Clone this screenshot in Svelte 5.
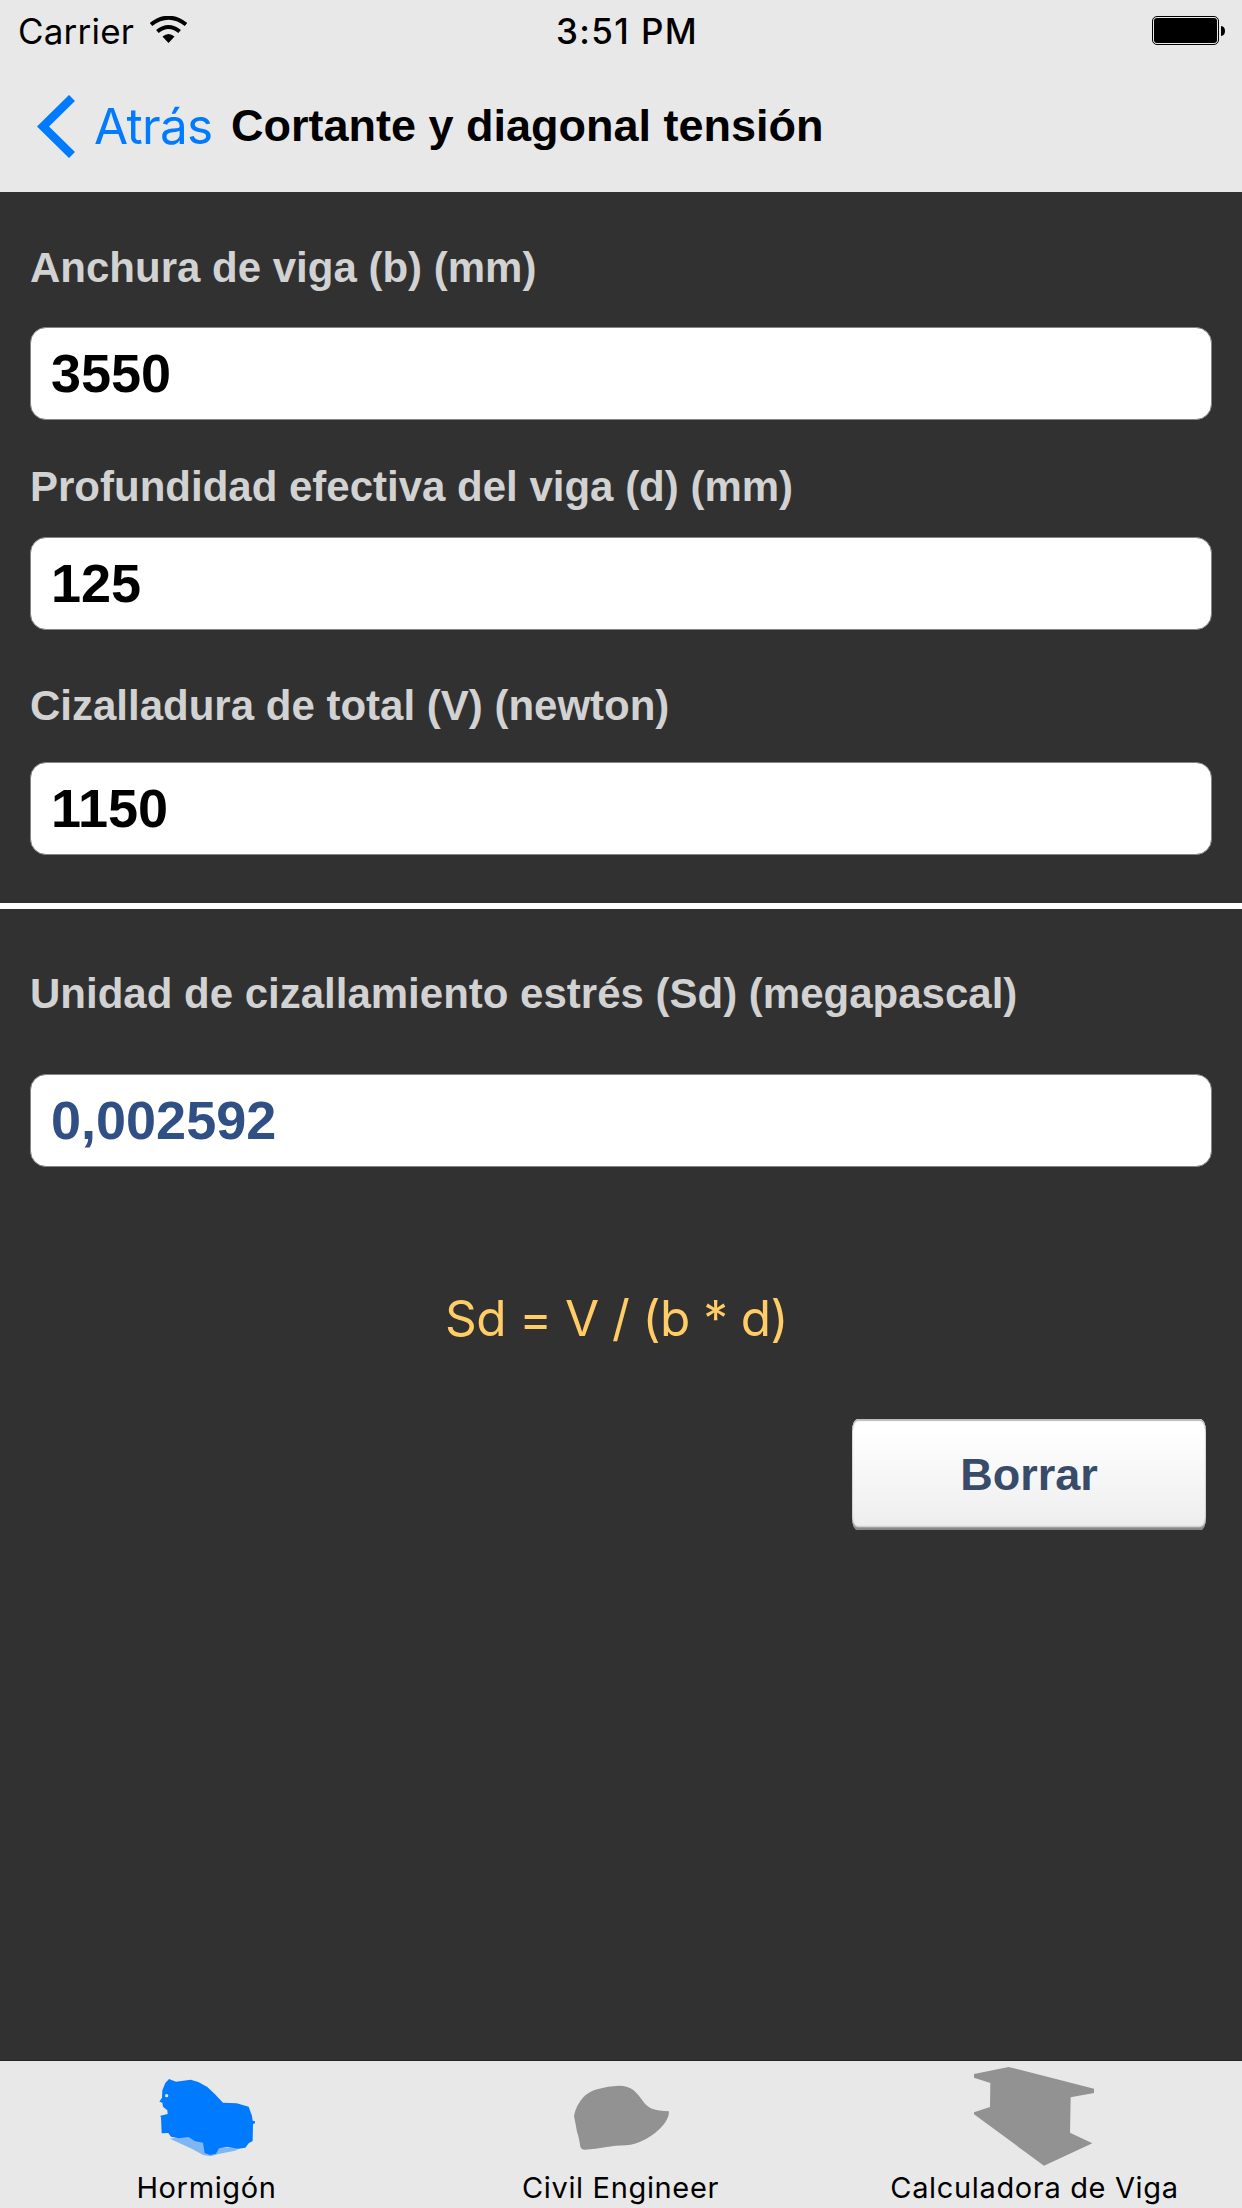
<script>
	let fields = $state([
		{ id: 'b', label: 'Anchura de viga (b) (mm)', value: '3550' },
		{ id: 'd', label: 'Profundidad efectiva del viga (d) (mm)', value: '125' },
		{ id: 'v', label: 'Cizalladura de total (V) (newton)', value: '1150' }
	]);

	// Sd = V / (b * d), shown with a decimal comma
	let stress = $derived.by(() => {
		const [b, d, v] = fields.map((f) => parseFloat(f.value.replace(',', '.')));
		const sd = v / (b * d);
		return Number.isFinite(sd) ? sd.toFixed(6).replace('.', ',') : '';
	});

	let active = $state('hormigon');

	const tabs = [
		{ id: 'hormigon', name: 'Hormigón' },
		{ id: 'civil', name: 'Civil Engineer' },
		{ id: 'viga', name: 'Calculadora de Viga' }
	];

	function clear() {
		for (const field of fields) field.value = '';
	}
</script>

<svelte:head>
	<title>Cortante y diagonal tensión</title>
</svelte:head>

<div class="screen">
	<header>
		<div class="status-bar">
			<div class="carrier">
				<span>Carrier</span>
				<svg class="wifi" viewBox="0 0 110 80" aria-hidden="true">
					<path d="M3 25 Q55 -15 107 25" fill="none" stroke="#000" stroke-width="12" />
					<path d="M22 46 Q55 19 88 46" fill="none" stroke="#000" stroke-width="12" />
					<path d="M37 61 Q55 46 73 61 L55 80 Z" />
				</svg>
			</div>
			<span class="time">3:51 PM</span>
			<div class="battery">
				<svg viewBox="0 0 73 29" aria-hidden="true">
					<rect x="0.5" y="0.5" width="66" height="28" rx="4.5" fill="#e8e8e8" stroke="#000" />
					<rect x="2" y="2" width="63" height="25" rx="3" />
					<path d="M69 10 Q73 10.5 73 15 Q73 19.5 69 20 Z" />
				</svg>
			</div>
		</div>
		<nav>
			<button class="back">
				<svg viewBox="0 0 39 63" aria-hidden="true">
					<path d="M35 3 L6 31.5 L35 60" fill="none" stroke="#007aff" stroke-width="8.5" />
				</svg>
				<span>Atrás</span>
			</button>
			<h1>Cortante y diagonal tensión</h1>
		</nav>
	</header>

	<main>
		<section class="inputs">
			{#each fields as field (field.id)}
				<div class="field {field.id}">
					<label for={field.id}>{field.label}</label>
					<input id={field.id} type="text" bind:value={field.value} />
				</div>
			{/each}
		</section>

		<section class="result">
			<div class="field sd">
				<label for="sd">Unidad de cizallamiento estrés (Sd) (megapascal)</label>
				<input id="sd" type="text" value={stress} readonly />
			</div>
			<p class="formula">Sd = V / (b * d)</p>
			<button class="clear" onclick={clear}>Borrar</button>
		</section>
	</main>

	<footer>
		{#each tabs as tab (tab.id)}
			<button class="tab {tab.id}" class:active={active === tab.id} onclick={() => (active = tab.id)}>
				{#if tab.id === 'hormigon'}
					<svg viewBox="66 33 390 300" aria-hidden="true">
						<path
							opacity="0.45"
							d="M128 250 L150 266 L196 258 L252 276 L295 293 L362 293 L345 302 L296 312 L272 319 L250 315 L215 296 L150 266 Z"
						/>
						<path
							d="M136 99 L147 87 L168 95 L212 89 L235 96 L262 111 L285 133 L309 158 L350 160 L386 170 L396 198 L398 212 L405 214 L405 220 L399 222 L398 273 L386 280 L376 293 L355 296 L322 291 L297 295 L288 311 L271 315 L254 309 L249 278 L226 274 L205 261 L177 265 L153 260 L145 249 L125 250 L123 200 L119 198 L143 192 L142 181 L129 170 L127 158 L118 155 L126 143 L127 121 Z"
						/>
						<circle class="hole" cx="140" cy="137" r="5" />
					</svg>
				{:else if tab.id === 'civil'}
					<svg viewBox="168 33 390 300" aria-hidden="true">
						<path
							d="M241 290 Q237 262 231 245 Q226 218 222 198 Q228 166 250 142 Q268 124 291 118 Q325 108 356 107 Q386 107 401 121 Q416 135 427 151 Q438 169 456 176 Q476 182 507 184 Q507 205 489 226 Q470 249 438 267 Q405 284 378 286 Q345 287 320 291 Q285 298 255 299 Q244 299 241 290 Z"
						/>
					</svg>
				{:else}
					<svg viewBox="300 33 390 300" aria-hidden="true">
						<path
							d="M312 72 L416 51 L672 116 L672 129 L602 142 L600 248 L667 280 L522 347 L312 193 L312 187 L360 171 L361 99 L312 83 Z"
						/>
					</svg>
				{/if}
				<span>{tab.name}</span>
			</button>
		{/each}
	</footer>
</div>

<style>
	:global(body) {
		margin: 0;
		background: #313131;
	}

	.screen {
		display: flex;
		flex-direction: column;
		width: 1242px;
		height: 2208px;
		overflow: hidden;
		background: #313131;
		font-family: 'Liberation Sans', Helvetica, Arial, sans-serif;
	}

	button {
		margin: 0;
		padding: 0;
		border: none;
		background: none;
		font: inherit;
		color: inherit;
	}

	svg {
		display: block;
	}

	/* Header */
	header {
		height: 192px;
		flex: none;
		background: #e8e8e8;
	}

	.status-bar {
		display: grid;
		grid-template-columns: 1fr auto 1fr;
		box-sizing: border-box;
		height: 62px;
		padding: 1px 17px 0 18px;
		font-family: Inter, sans-serif;
		font-size: 35px;
		line-height: 60px;
	}

	.carrier {
		display: flex;
	}

	.carrier span {
		width: 132px;
		letter-spacing: 0.2px;
	}

	.wifi {
		width: 37px;
		height: 27px;
		margin-top: 15px;
	}

	.time {
		padding-left: 11px;
		font-weight: 500;
		letter-spacing: 1.4px;
	}

	.battery svg {
		width: 73px;
		height: 29px;
		margin: 15px 0 0 auto;
	}

	nav {
		display: flex;
		align-items: center;
		height: 128px;
		padding-left: 37px;
	}

	.back {
		display: flex;
		align-items: center;
		width: 194px;
		color: #007aff;
		font-family: Inter, sans-serif;
		font-size: 49.5px;
		line-height: 60px;
		letter-spacing: -0.7px;
	}

	.back svg {
		width: 39px;
		height: 63px;
		margin-right: 18px;
	}

	h1 {
		margin: 0;
		font-size: 45px;
		line-height: 60px;
		font-weight: bold;
		white-space: nowrap;
	}

	/* Form */
	main {
		flex: 1;
	}

	.inputs {
		box-sizing: border-box;
		height: 717px;
		padding: 46px 30px 0;
		border-bottom: 6px solid #fff;
	}

	.result {
		display: flex;
		flex-direction: column;
		padding: 55px 30px 0;
	}

	.field {
		display: flex;
		flex-direction: column;
		gap: 29px;
		margin-bottom: 37px;
	}

	.field.d {
		gap: 20px;
		margin-bottom: 46px;
	}

	.field.v {
		gap: 26px;
		margin-bottom: 0;
	}

	.field.sd {
		gap: 50px;
		margin-bottom: 0;
	}

	label {
		color: #d2d2d2;
		font-size: 42px;
		line-height: 60px;
		font-weight: bold;
		white-space: nowrap;
	}

	input {
		box-sizing: border-box;
		width: 1182px;
		height: 93px;
		padding: 0 20px 2px;
		border: 1px solid #858585;
		border-radius: 16px;
		outline: none;
		background: #fff;
		color: #000;
		font-family: inherit;
		font-size: 54px;
		font-weight: bold;
	}

	.sd input {
		color: #304f85;
	}

	.formula {
		margin: 121px 0 0 415px;
		color: #ffcc66;
		font-family: Inter, sans-serif;
		font-size: 49.5px;
		line-height: 60px;
		letter-spacing: -0.55px;
		white-space: nowrap;
	}

	.clear {
		align-self: flex-end;
		width: 354px;
		height: 111px;
		margin: 71px 6px 0 0;
		border-radius: 6px / 12px;
		background: linear-gradient(#fff 10%, #eee 95%);
		box-shadow:
			inset 0 -4px 2px -1px #858585,
			inset 0 2px 1px #bdbdbd,
			inset 0 0 2px #999;
		color: #384b69;
		font-size: 45px;
		font-weight: bold;
	}

	/* Tab bar */
	footer {
		display: flex;
		box-sizing: border-box;
		height: 148px;
		flex: none;
		border-top: 1px solid #282425;
		background: #e8e8e8;
	}

	.tab {
		display: flex;
		flex-direction: column;
		align-items: center;
		width: 414px;
		color: #000;
		fill: #929292;
		font-family: Inter, sans-serif;
		font-size: 29px;
		letter-spacing: 0.65px;
	}

	.tab.active {
		fill: #007aff;
	}

	.tab svg {
		width: 130px;
		height: 100px;
		overflow: visible;
	}

	.tab span {
		margin: 7px 1px 0 0;
		line-height: 40px;
		white-space: nowrap;
	}

	.hole {
		fill: #e8e8e8;
	}
</style>
